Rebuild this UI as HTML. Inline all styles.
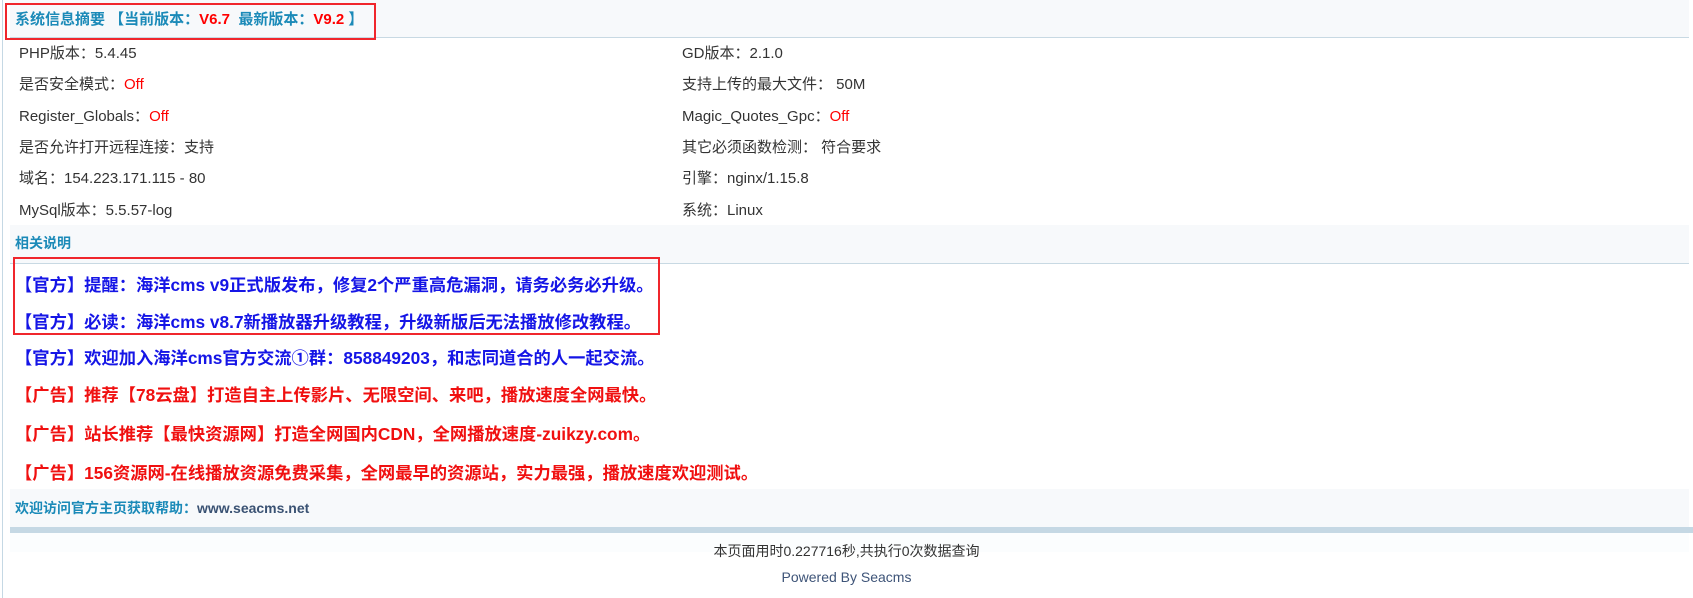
<!DOCTYPE html>
<html><head><meta charset="utf-8"><style>
*{margin:0;padding:0;box-sizing:border-box}
body{width:1693px;height:598px;background:#fff;font-family:"Liberation Sans","Noto Sans CJK SC",sans-serif;color:#333;position:relative;overflow:hidden}
.vl{position:absolute;left:2px;top:0;width:1px;height:598px;background:#c5d8e4}
.band{position:absolute;left:10px;width:1679px;background:#f7f9fb}
.ttl{color:#1b8ab8;font-weight:bold;font-size:15px;position:absolute;left:15px}
.row{position:absolute;font-size:15px;line-height:20px;white-space:nowrap}
.off{color:#f00}
.lnk{position:absolute;left:15px;font-size:17.3px;font-weight:bold;white-space:nowrap;line-height:22px}
.b{color:#1515e6}.r{color:#f01010}
.box{position:absolute;border:2px solid #f0262c}
</style></head><body>
<div class="vl"></div>
<div class="band" style="top:0;height:38px;border-bottom:1px solid #c8d9e3"></div>
<div class="ttl" style="top:8px">系统信息摘要 【当前版本：<span class="off">V6.7</span>&nbsp; 最新版本：<span class="off">V9.2</span> 】</div>
<div class="box" style="left:5px;top:3px;width:371px;height:37px"></div>

<div class="row" style="left:19px;top:44px">PHP版本：5.4.45</div>
<div class="row" style="left:682px;top:44px">GD版本：2.1.0</div>
<div class="row" style="left:19px;top:75px">是否安全模式：<span class="off">Off</span></div>
<div class="row" style="left:682px;top:75px">支持上传的最大文件： 50M</div>
<div class="row" style="left:19px;top:107px">Register_Globals：<span class="off">Off</span></div>
<div class="row" style="left:682px;top:107px">Magic_Quotes_Gpc：<span class="off">Off</span></div>
<div class="row" style="left:19px;top:138px">是否允许打开远程连接：支持</div>
<div class="row" style="left:682px;top:138px">其它必须函数检测： 符合要求</div>
<div class="row" style="left:19px;top:169px">域名：154.223.171.115 - 80</div>
<div class="row" style="left:682px;top:169px">引擎：nginx/1.15.8</div>
<div class="row" style="left:19px;top:201px">MySql版本：5.5.57-log</div>
<div class="row" style="left:682px;top:201px">系统：Linux</div>

<div class="band" style="top:225px;height:39px;border-bottom:1px solid #c8d9e3"></div>
<div class="ttl" style="top:233px;font-size:14px">相关说明</div>

<div class="lnk b" style="top:274px">【官方】提醒：海洋cms v9正式版发布，修复2个严重高危漏洞，请务必务必升级。</div>
<div class="lnk b" style="top:311px">【官方】必读：海洋cms v8.7新播放器升级教程，升级新版后无法播放修改教程。</div>
<div class="box" style="left:13px;top:257px;width:647px;height:78px"></div>
<div class="lnk b" style="top:347px">【官方】欢迎加入海洋cms官方交流①群：858849203，和志同道合的人一起交流。</div>
<div class="lnk r" style="top:384px">【广告】推荐【78云盘】打造自主上传影片、无限空间、来吧，播放速度全网最快。</div>
<div class="lnk r" style="top:423px">【广告】站长推荐【最快资源网】打造全网国内CDN，全网播放速度-zuikzy.com。</div>
<div class="lnk r" style="top:462px">【广告】156资源网-在线播放资源免费采集，全网最早的资源站，实力最强，播放速度欢迎测试。</div>

<div class="band" style="top:489px;height:38px"></div>
<div class="ttl" style="top:498px;font-size:14px">欢迎访问官方主页获取帮助：<span style="color:#3a5273">www.seacms.net</span></div>
<div style="position:absolute;left:10px;top:527px;width:1683px;height:6px;background:#c5d8e4"></div>
<div style="position:absolute;left:10px;top:533px;width:1679px;height:19px;background:#fbfdfe"></div>
<div class="row" style="left:0;width:1693px;text-align:center;top:541px;font-size:14px">本页面用时0.227716秒,共执行0次数据查询</div>
<div class="row" style="left:0;width:1693px;text-align:center;top:567px;font-size:14px;color:#3e5478">Powered By Seacms</div>
</body></html>
